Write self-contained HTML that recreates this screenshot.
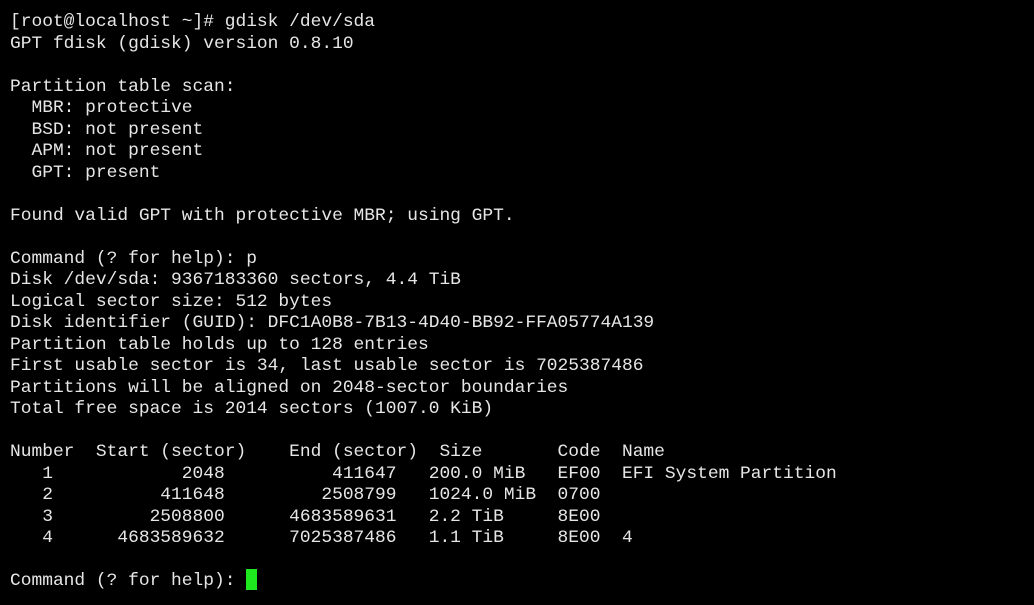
<!DOCTYPE html>
<html><head><style>
html,body{margin:0;padding:0;background:#000;width:1034px;height:605px;overflow:hidden}
pre{margin:0;position:absolute;left:10px;top:12px;font-family:"Liberation Mono","DejaVu Sans Mono",monospace;font-size:17.9px;line-height:21.5px;color:#e6e6e6}
.c{position:absolute;left:246px;top:569px;width:11px;height:21px;background:#1ee81e}
</style></head><body>
<pre>[root@localhost ~]# gdisk /dev/sda
GPT fdisk (gdisk) version 0.8.10

Partition table scan:
  MBR: protective
  BSD: not present
  APM: not present
  GPT: present

Found valid GPT with protective MBR; using GPT.

Command (? for help): p
Disk /dev/sda: 9367183360 sectors, 4.4 TiB
Logical sector size: 512 bytes
Disk identifier (GUID): DFC1A0B8-7B13-4D40-BB92-FFA05774A139
Partition table holds up to 128 entries
First usable sector is 34, last usable sector is 7025387486
Partitions will be aligned on 2048-sector boundaries
Total free space is 2014 sectors (1007.0 KiB)

Number  Start (sector)    End (sector)  Size       Code  Name
   1            2048          411647   200.0 MiB   EF00  EFI System Partition
   2          411648         2508799   1024.0 MiB  0700  
   3         2508800      4683589631   2.2 TiB     8E00  
   4      4683589632      7025387486   1.1 TiB     8E00  4

Command (? for help): </pre>
<div class="c"></div>
</body></html>
